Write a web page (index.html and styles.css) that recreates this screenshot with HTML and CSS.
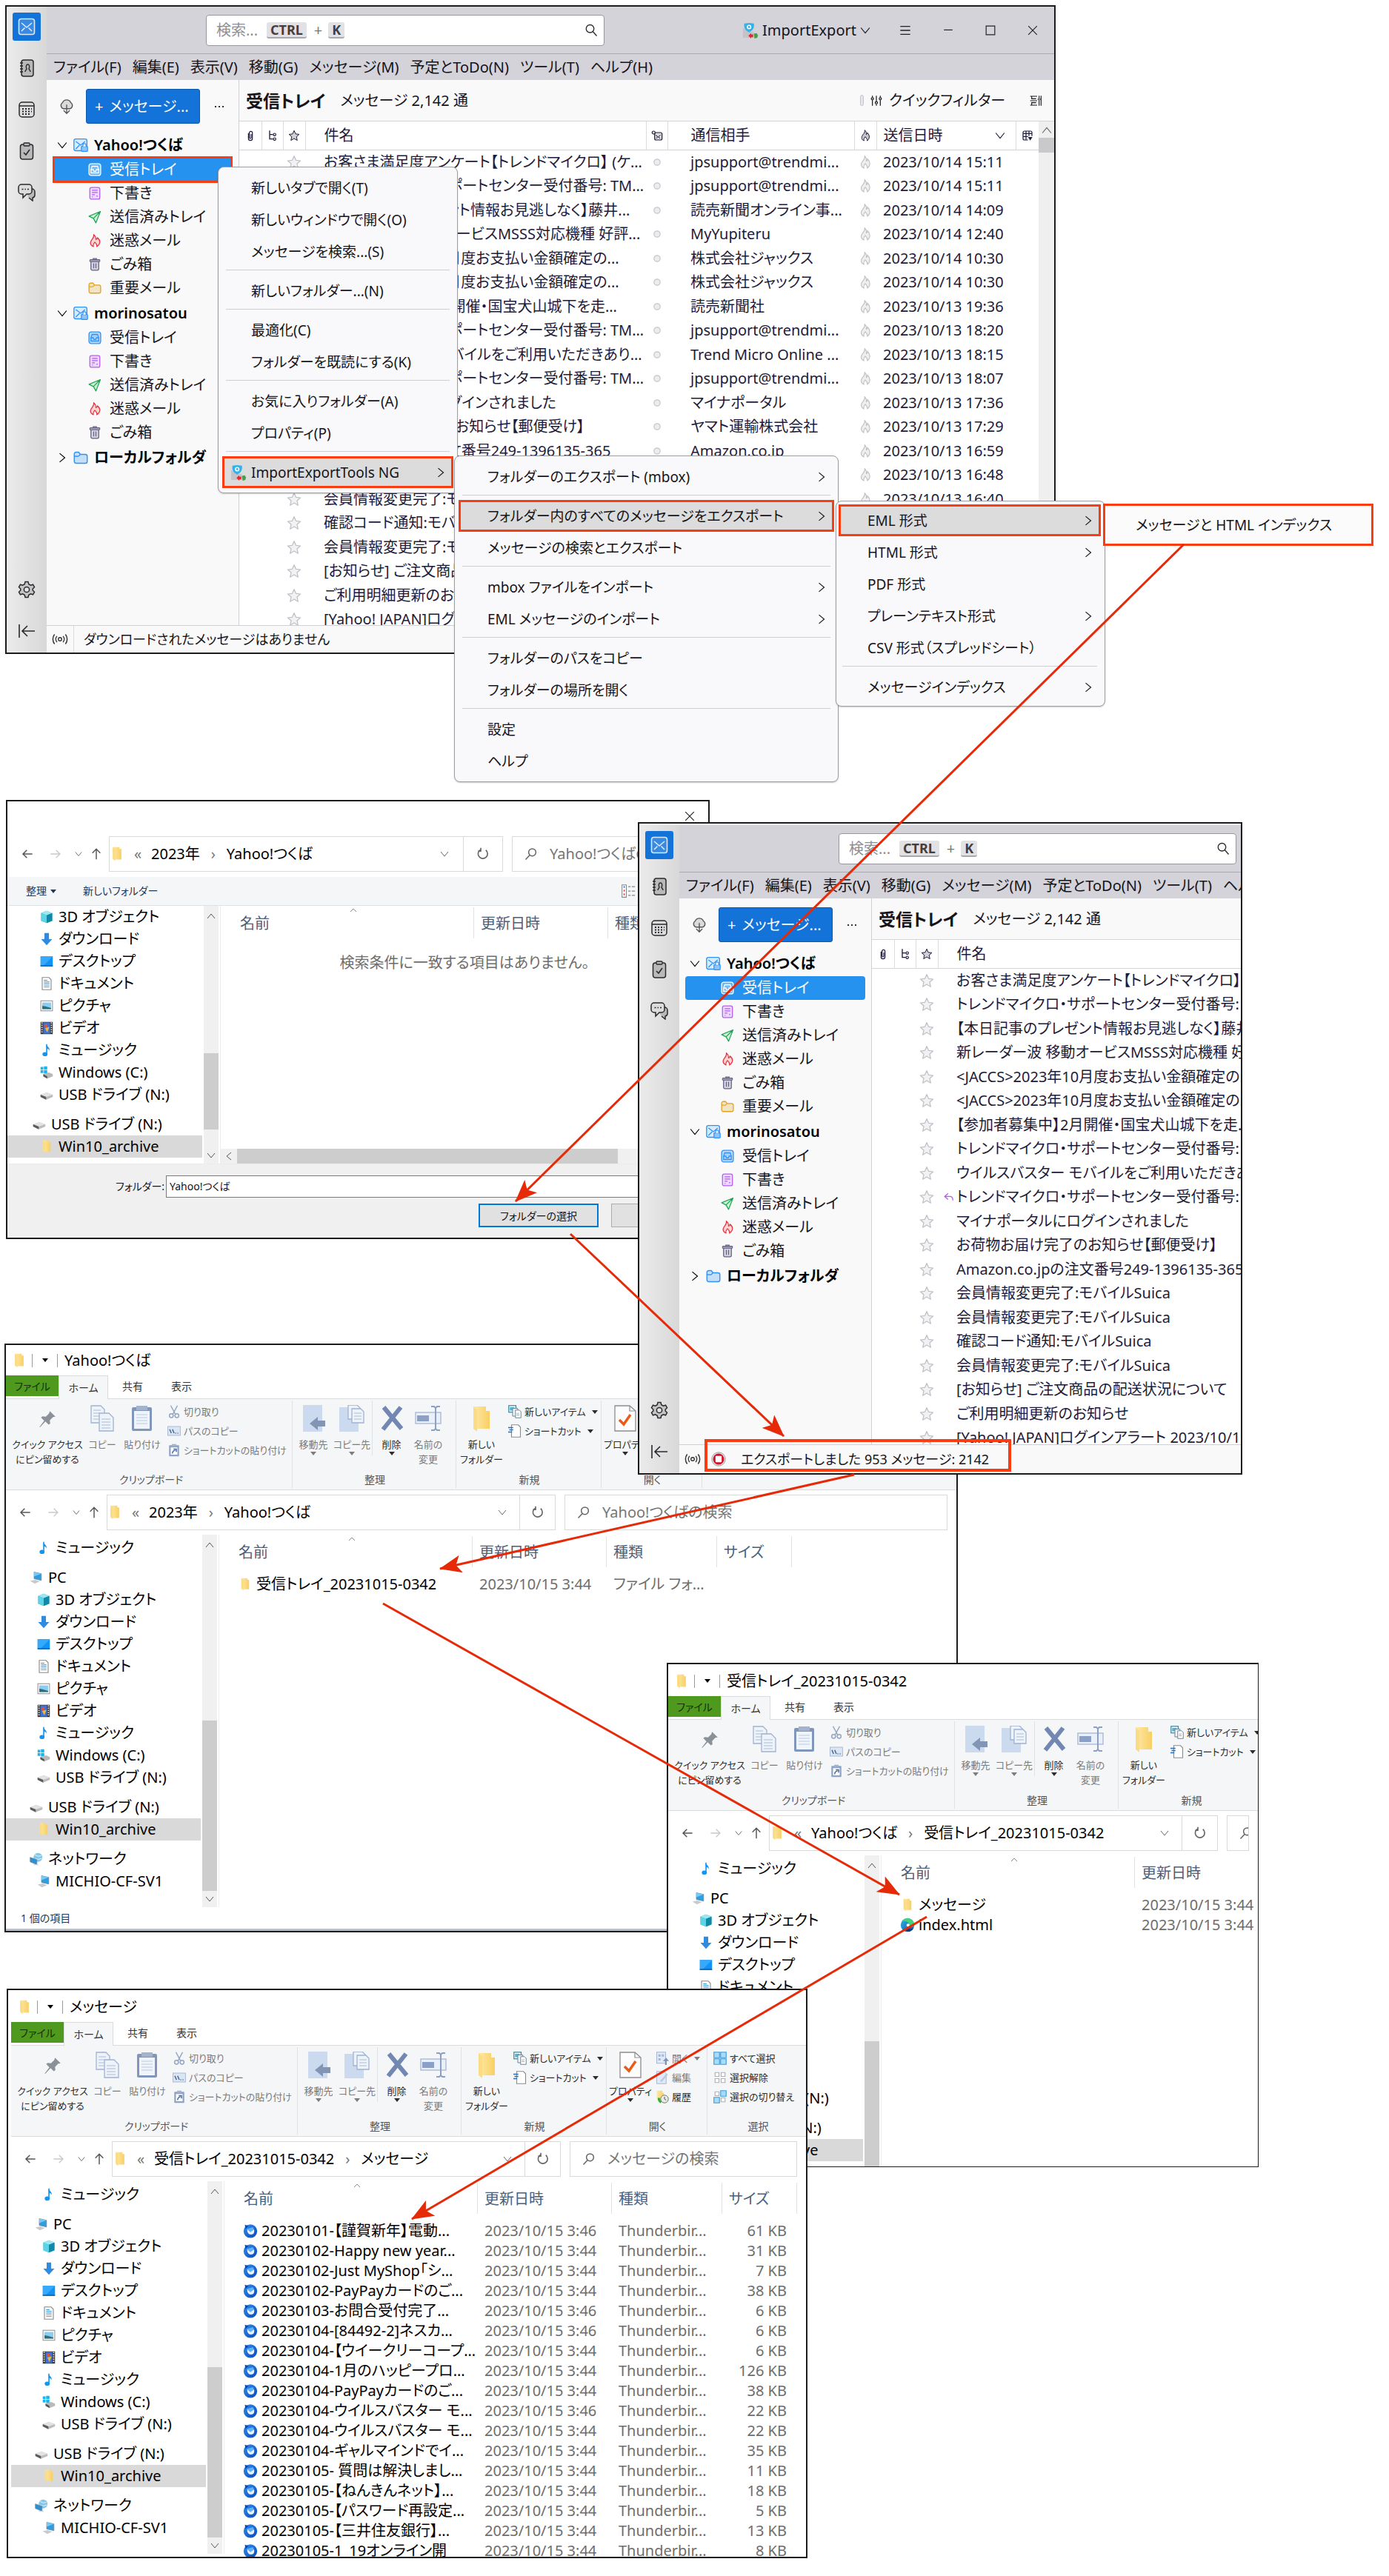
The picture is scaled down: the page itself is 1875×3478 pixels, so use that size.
FILE: index.html
```html
<!DOCTYPE html>
<html lang="ja">
<head>
<meta charset="utf-8">
<meta name="viewport" content="width=device-width, initial-scale=1">
<title>ImportExportTools NG エクスポート手順</title>
<link rel="stylesheet" href="styles.css">
</head>
<body>
<svg class="sprite" aria-hidden="true">
  <defs>
    <linearGradient id="g-folder" x1="0" x2="1"><stop offset="0" stop-color="#ffe9a6"/><stop offset="1" stop-color="#f8cf63"/></linearGradient>
    <linearGradient id="g-edge" x1="0" y1="0" x2="1" y2="1"><stop offset="0" stop-color="#2fb8e6"/><stop offset="1" stop-color="#0c4fa8"/></linearGradient>
    <linearGradient id="g-bird" x1="0" y1="0" x2="1" y2="1"><stop offset="0" stop-color="#2f8df0"/><stop offset="1" stop-color="#0a49b8"/></linearGradient>
  </defs>
  <!-- Mail window -->
  <symbol id="i-mail" viewBox="0 0 24 24"><rect x="1.5" y="1.5" width="21" height="21" rx="3" fill="currentColor" fill-opacity=".2" stroke="currentColor" stroke-width="1.6"/><path d="M5 7l7 6 7-6M5 18l4.500-4.500M19 18l-4.500-4.500" fill="none" stroke="currentColor" stroke-width="1.600"/></symbol>
  <symbol id="i-addr" viewBox="0 0 24 24"><rect x="5" y="1" width="16" height="22" rx="3" fill="#b9b9ba" stroke="#2a2a2e" stroke-width="1.500"/><path d="M3 5h4M3 9h4M3 13h4M3 17h4M10 17c0-2 1.500-2.500 2-4-1.500-3-.5-6 1.500-6s3 3 1.500 6c.5 1.500 2 2 2 4" fill="none" stroke="#2a2a2e" stroke-width="1.400"/></symbol>
  <symbol id="i-cal" viewBox="0 0 24 24"><rect x="2" y="2" width="20" height="20" rx="4" fill="#dcdcdc" stroke="#2a2a2e" stroke-width="1.500"/><path d="M2 7h20" stroke="#2a2a2e" stroke-width="1.500"/><path d="M6 11h2m2 0h2m2 0h2m2 0h1M6 14.500h2m2 0h2m2 0h2m2 0h1M6 18h2m2 0h2m2 0h2" stroke="#2a2a2e" stroke-width="2"/></symbol>
  <symbol id="i-task" viewBox="0 0 24 24"><rect x="3.500" y="3" width="17" height="20" rx="3" fill="#b9b9ba" stroke="#2a2a2e" stroke-width="1.500"/><rect x="8" y="1" width="8" height="4" rx="1" fill="#b9b9ba" stroke="#2a2a2e" stroke-width="1.300"/><path d="M8 14l3 3 5-7" fill="none" stroke="#2a2a2e" stroke-width="1.600"/></symbol>
  <symbol id="i-chat" viewBox="0 0 24 24"><path d="M8 7h11a4 4 0 0 1 4 4v4a4 4 0 0 1-3 4v4l-5-4" fill="#b9b9ba" stroke="#2a2a2e" stroke-width="1.500"/><path d="M5 1h10a4 4 0 0 1 4 4v5a4 4 0 0 1-4 4h-3l-5 5v-5H5a4 4 0 0 1-4-4V5a4 4 0 0 1 4-4z" fill="#dcdcdc" stroke="#2a2a2e" stroke-width="1.500"/><path d="M5.500 7.500h2m2 0h1.500m2 0h2" stroke="#2a2a2e" stroke-width="1.500"/></symbol>
  <symbol id="i-gear" viewBox="0 0 24 24"><path d="M10 1.500h4l.8 3.200 2.600 1.500 3.100-1 2 3.500-2.300 2.300v2l2.300 2.300-2 3.500-3.100-1-2.600 1.500-.8 3.200h-4l-.8-3.200-2.600-1.500-3.100 1-2-3.500L3.800 13v-2L1.500 8.700l2-3.500 3.100 1 2.600-1.500z" fill="#c4c4c5" stroke="#2a2a2e" stroke-width="1.500"/><circle cx="12" cy="12" r="3.600" fill="#e4e4e4" stroke="#2a2a2e" stroke-width="1.500"/></symbol>
  <symbol id="i-collapse" viewBox="0 0 24 24"><path d="M2 3v18M23 12H6M13 5l-7 7 7 7" fill="none" stroke="#2a2a2e" stroke-width="1.600"/></symbol>
  <symbol id="i-cloud" viewBox="0 0 24 24"><path d="M7 15a5 5 0 0 1-1-9 6.500 6.500 0 0 1 12 0 5 5 0 0 1-1 9z" fill="#dadada" stroke="#55555a" stroke-width="1.500"/><path d="M12 9v13M7.500 17.500L12 22l4.500-4.500" fill="none" stroke="#55555a" stroke-width="1.500"/></symbol>
  <symbol id="i-account" viewBox="0 0 24 24"><rect x="1" y="2" width="21" height="19" rx="3" fill="#d7edff" stroke="#2f93f5" stroke-width="1.600"/><path d="M4 6l8 6 7-6M4 18l6-6" fill="none" stroke="#2f93f5" stroke-width="1.600"/><rect x="13" y="14" width="10" height="8" rx="1" fill="#8cc5fb" stroke="#2f93f5" stroke-width="1.500"/><path d="M15.500 14v-2a2.500 2.500 0 0 1 5 0v2" fill="#fff" stroke="#2f93f5" stroke-width="1.500"/></symbol>
  <symbol id="i-inbox" viewBox="0 0 24 24"><rect x="1.500" y="1.500" width="21" height="21" rx="4" fill="currentColor" fill-opacity=".3" stroke="currentColor" stroke-width="1.800"/><path d="M5 12l2-6h10l2 6v6H5zM5 12h4l1.500 3h3L15 12h4" fill="currentColor" fill-opacity=".15" stroke="currentColor" stroke-width="1.700"/></symbol>
  <symbol id="i-draft" viewBox="0 0 24 24"><rect x="3" y="1.500" width="18" height="21" rx="3" fill="#eed8ff" stroke="#b35cf0" stroke-width="1.700"/><path d="M7 6.500h10M7 10.500h10M7 14.500h5M7 18.500h1.500M15 17h2" stroke="#b35cf0" stroke-width="1.700"/></symbol>
  <symbol id="i-sent" viewBox="0 0 24 24"><path d="M22 2L1.500 10.500l8 4L14 22.500zM22 2L9.500 14.500" fill="#c9f2d6" stroke="#23a455" stroke-width="1.700" stroke-linejoin="round"/></symbol>
  <symbol id="i-junk" viewBox="0 0 24 24"><path d="M10 1c5 4 4 7 4 9 2-.5 2.500-2 2.500-3.500C21 10 22 14 20 18c-1 2-2.500 3.500-4.500 4.500 1-3 0-5-3.500-8-2.500 3-4 5-2.500 8C5 21 3 17 5 13c1.500-3.500 6-5.500 5-12z" fill="#ffd4d4" stroke="#e2333e" stroke-width="1.700" stroke-linejoin="round"/></symbol>
  <symbol id="i-trash" viewBox="0 0 24 24"><path d="M5 6h14v14a2.500 2.500 0 0 1-2.500 2.500h-9A2.500 2.500 0 0 1 5 20z" fill="#d5d4e2" stroke="#62607f" stroke-width="1.700"/><rect x="3" y="3.500" width="18" height="3.500" rx="1" fill="#aba9c2" stroke="#62607f" stroke-width="1.400"/><path d="M9 3V1.500h6V3M10 10v9M14 10v9" fill="none" stroke="#62607f" stroke-width="1.600"/></symbol>
  <symbol id="i-folder" viewBox="0 0 24 24"><path d="M1.500 6a3 3 0 0 1 3-3h4l3 3.500h8a3 3 0 0 1 3 3V18a3 3 0 0 1-3 3h-15a3 3 0 0 1-3-3zM1.500 9.500H8l3.500-3" fill="currentColor" fill-opacity=".25" stroke="currentColor" stroke-width="1.700"/></symbol>
  <symbol id="i-clip" viewBox="0 0 24 24"><path d="M8 7v11a4 4 0 0 0 8 0V6.500a3 3 0 0 0-6 0V17a2 2 0 0 0 3.500 0V9" fill="none" stroke="currentColor" stroke-width="1.800"/></symbol>
  <symbol id="i-thread" viewBox="0 0 24 24"><path d="M6 2v17h7M6 10h7" fill="none" stroke="currentColor" stroke-width="2"/><circle cx="16" cy="10" r="2.500" fill="none" stroke="currentColor" stroke-width="1.800"/><circle cx="16" cy="19" r="2.500" fill="none" stroke="currentColor" stroke-width="1.800"/></symbol>
  <symbol id="i-star" viewBox="0 0 24 24"><path d="M12 2l3 6.800 7.300.8-5.500 4.900 1.600 7.300L12 18l-6.400 3.800 1.600-7.300-5.500-4.900L9 8.800z" fill="currentColor" fill-opacity=".2" stroke="currentColor" stroke-width="1.500" stroke-linejoin="round"/></symbol>
  <symbol id="i-flame" viewBox="0 0 24 24"><path d="M11 1c4 4 3 6 3 9 1.500-.5 2-2 2-4 4 4 5 8 3.500 12-.8 2-2 3.500-3.500 4.500 0-3-1-5-4-8-2.500 3-3.500 5-2.500 8C5 21 4 17 5.500 13 7 9.500 12 7 11 1z" fill="currentColor" fill-opacity=".25" stroke="currentColor" stroke-width="1.500"/></symbol>
  <symbol id="i-dot" viewBox="0 0 24 24"><circle cx="12" cy="12" r="5" fill="#ececef" stroke="#c6c6cc" stroke-width="1.500"/></symbol>
  <symbol id="i-readcol" viewBox="0 0 24 24"><rect x="7" y="6" width="15" height="15" rx="3" fill="#d9d9de" stroke="currentColor" stroke-width="1.800"/><path d="M9 11l5 4 5-4M10 18l3-3M18 18l-3-3" fill="none" stroke="currentColor" stroke-width="1.500"/><circle cx="5" cy="6" r="3" fill="#fff" stroke="currentColor" stroke-width="1.800"/></symbol>
  <symbol id="i-picker" viewBox="0 0 24 24"><path d="M13 21H6a3 3 0 0 1-3-3V6a3 3 0 0 1 3-3h12a3 3 0 0 1 3 3v7M3 8h18M3 14h10M9 3v18M15 3v10" fill="none" stroke="currentColor" stroke-width="1.800"/><path d="M13 15h9l-4.500 7z" fill="currentColor"/></symbol>
  <symbol id="i-filter" viewBox="0 0 24 24"><path d="M4 2v3M4 11v11M12 2v11M12 19v3M20 2v3M20 11v11" stroke="currentColor" stroke-width="1.800"/><g fill="none" stroke="currentColor" stroke-width="1.800"><circle cx="4" cy="8" r="2.300"/><circle cx="12" cy="16" r="2.300"/><circle cx="20" cy="8" r="2.300"/></g></symbol>
  <symbol id="i-layout" viewBox="0 0 24 24"><path d="M1 3h14M1 21h14M4 3v5h9M4 21v-5h9M1 12h14M19 2v4M19 12v10M23 2v20" fill="none" stroke="currentColor" stroke-width="1.700"/><circle cx="19" cy="9" r="2" fill="none" stroke="currentColor" stroke-width="1.500"/></symbol>
  <symbol id="i-antenna" viewBox="0 0 24 24"><circle cx="12" cy="12" r="2.500" fill="none" stroke="#333" stroke-width="1.500"/><path d="M7.500 7.500a7 7 0 0 0 0 9M16.500 7.500a7 7 0 0 1 0 9M4 5a11 11 0 0 0 0 14M20 5a11 11 0 0 1 0 14" fill="none" stroke="#333" stroke-width="1.600"/></symbol>
  <symbol id="i-search" viewBox="0 0 24 24"><circle cx="10" cy="9" r="7" fill="none" stroke="#2a2a2e" stroke-width="1.800"/><path d="M15 14l7 8" stroke="#2a2a2e" stroke-width="1.800"/></symbol>
  <symbol id="i-down" viewBox="0 0 24 24"><path d="M2 6l10 12L22 6" fill="none" stroke="currentColor" stroke-width="2"/></symbol>
  <symbol id="i-right" viewBox="0 0 24 24"><path d="M6 2l12 10L6 22" fill="none" stroke="currentColor" stroke-width="2"/></symbol>
  <symbol id="i-more" viewBox="0 0 24 24"><path d="M3 12h3M10.500 12h3M18 12h3" stroke="#333" stroke-width="3"/></symbol>
  <symbol id="i-burger" viewBox="0 0 24 24"><path d="M2 4h20M2 12h20M2 20h20" stroke="#222" stroke-width="2"/></symbol>
  <symbol id="i-min" viewBox="0 0 24 24"><path d="M2 11h20" stroke="#222" stroke-width="2"/></symbol>
  <symbol id="i-max" viewBox="0 0 24 24"><path d="M2 2h20v20H2z" fill="none" stroke="#222" stroke-width="2"/></symbol>
  <symbol id="i-close" viewBox="0 0 24 24"><path d="M2 2l20 20M22 2L2 22" stroke="#222" stroke-width="2"/></symbol>
  <symbol id="i-addon" viewBox="0 0 24 24"><path d="M1 8l8 6h8v9H1z" fill="#c3c3c8"/><path d="M3 2l7-1 7 1c1 6-1 10-7 13C4 12 2 8 3 2z" fill="#35b1ea"/><circle cx="10" cy="7" r="3.300" fill="#fff"/><circle cx="10" cy="7" r="1.600" fill="#35b1ea"/><path d="M9 20l4-4v2h3v4h-3v2z" fill="#e8262b"/><path d="M17 17l4-1 2 3-1 4-4 1z" fill="#43a047"/></symbol>
  <symbol id="i-reply" viewBox="0 0 24 24"><path d="M10 4l-8 7 8 7M2 11h12q7 0 7 9" fill="none" stroke="#b35cf0" stroke-width="2.200"/></symbol>
  <symbol id="i-stop" viewBox="0 0 24 24"><circle cx="12" cy="12" r="11" fill="#e7e7e7" stroke="#8a8a8a" stroke-width="1"/><circle cx="12" cy="12" r="9" fill="#d31428"/><rect x="7" y="7" width="10" height="10" rx="1" fill="#fff"/></symbol>
  <!-- Explorer window -->
  <symbol id="x-folder" viewBox="0 0 24 24"><path d="M5 1h11v3h3v17H9l-4-2z" fill="url(#g-folder)"/><path d="M5 1l4 3v19l-4-3z" fill="#fbdc85"/></symbol>
  <symbol id="x-back" viewBox="0 0 24 24"><path d="M22 12H3M11 4l-8 8 8 8" fill="none" stroke="currentColor" stroke-width="2.200"/></symbol>
  <symbol id="x-fwd" viewBox="0 0 24 24"><path d="M2 12h19M13 4l8 8-8 8" fill="none" stroke="currentColor" stroke-width="2"/></symbol>
  <symbol id="x-up" viewBox="0 0 24 24"><path d="M12 23V2M4 10l8-8 8 8" fill="none" stroke="currentColor" stroke-width="2.200"/></symbol>
  <symbol id="x-refresh" viewBox="0 0 24 24"><path d="M17 5a8.500 8.500 0 1 1-9-1M8 1v6H3" fill="none" stroke="#666" stroke-width="2.200"/></symbol>
  <symbol id="x-search" viewBox="0 0 24 24"><circle cx="14" cy="9" r="6.500" fill="none" stroke="#666" stroke-width="2"/><path d="M9.500 14L2 22" stroke="#666" stroke-width="2"/></symbol>
  <symbol id="x-3d" viewBox="0 0 24 24"><path d="M12 1l10 4v14l-10 4-10-4V5z" fill="#2cb3cf"/><path d="M12 1l10 4-10 4L2 5z" fill="#9be8f3"/><path d="M12 9l10-4v14l-10 4z" fill="#1089a8"/><path d="M2 5l10 4v14L2 19z" fill="#5fd3e6"/></symbol>
  <symbol id="x-download" viewBox="0 0 24 24"><path d="M8 1h8v11h6L12 23 2 12h6z" fill="#2f8be0"/></symbol>
  <symbol id="x-desktop" viewBox="0 0 24 24"><rect x="1" y="3" width="22" height="18" fill="#0f93f5"/><path d="M1 3h22L5 21H1z" fill="#35aafc"/><path d="M1 20h22" stroke="#0a5fae" stroke-width="2"/></symbol>
  <symbol id="x-doc" viewBox="0 0 24 24"><path d="M4 1h12l4 4v18H4z" fill="#fff" stroke="#8b8b8b" stroke-width="1.500"/><path d="M7 6h6M7 9h10M7 12h10" stroke="#2694d8" stroke-width="1.600"/><path d="M7 15h10M7 18h10" stroke="#8a9aa8" stroke-width="1.600"/></symbol>
  <symbol id="x-pic" viewBox="0 0 24 24"><rect x="1.500" y="3" width="21" height="18" fill="#fff" stroke="#9a9a9a" stroke-width="1.500"/><rect x="4" y="6" width="16" height="12" fill="#8ccbf2"/><path d="M4 12l6 1 10 3v2H4z" fill="#2d6f78"/></symbol>
  <symbol id="x-video" viewBox="0 0 24 24"><rect x="1" y="1" width="22" height="22" fill="#3a3a3a"/><rect x="6" y="2" width="12" height="20" fill="#3f72d8"/><circle cx="11" cy="8" r="3" fill="#e2543a"/><path d="M9 12l8-2-4 10z" fill="#e7bc32"/><path d="M3.500 2v20M20.500 2v20" stroke="#fff" stroke-width="2" stroke-dasharray="2 2"/></symbol>
  <symbol id="x-music" viewBox="0 0 24 24"><path d="M11 1c1 4 7 5 6 12-1-3-3-4-4-4v9" fill="#1296f0"/><path d="M11 1h2v18h-2z" fill="#1296f0"/><ellipse cx="9" cy="19" rx="4.500" ry="3.800" fill="#1296f0"/></symbol>
  <symbol id="x-win" viewBox="0 0 24 24"><path d="M1 2h5v5H1zM7 1h6v6H7zM1 8h5v5H1zM7 8h6v6H7z" fill="#19b5ee"/><path d="M6 15l10-3 7 3v4l-10 4-7-4z" fill="#b9b9b9"/><path d="M6 15l7 4v4l-7-4z" fill="#555"/></symbol>
  <symbol id="x-drive" viewBox="0 0 24 24"><path d="M1 12l11-4 11 4v4l-12 5-10-5z" fill="#bcbcbc"/><path d="M1 12l11-4 11 4-12 4z" fill="#e3e3e3"/><path d="M1 12l10 4v5L1 16z" fill="#5c5c5c"/></symbol>
  <symbol id="x-pc" viewBox="0 0 24 24"><path d="M8 2l13 3v12L8 14z" fill="#2f9ddf" stroke="#6b8296" stroke-width="1"/><path d="M8 2l13 3L8 10z" fill="#77c9f5"/><path d="M1 18l9-2 8 3-9 4z" fill="#c6cbd0"/></symbol>
  <symbol id="x-net" viewBox="0 0 24 24"><circle cx="15" cy="9" r="8" fill="#86c6e8"/><path d="M9 4q6 5 12 2M8 11q7 3 14 0" fill="none" stroke="#fff" stroke-width="1"/><path d="M1 9l12 4v9L1 17z" fill="#2a92d4" stroke="#6b8296" stroke-width="1"/><path d="M6 22l8-1 3 2H8z" fill="#ccd0d4"/></symbol>
  <symbol id="x-pin" viewBox="0 0 24 24"><path d="M15 2l7 7-3 .5-4 4 .5 4-2 1.500-4-4L3 22l-1 0 6-8-4-4 2-1.500 4 .5 4-4z" fill="#8b9199"/></symbol>
  <symbol id="x-copy" viewBox="0 0 32 36"><g fill="#eef3fa" stroke="#9fb3d1" stroke-width="1.300"><path d="M1 1h13l5 5v18H1z"/><path d="M12 11h13l6 6v18H12z"/></g><path d="M4 7h10M4 11h8M4 15h8M4 19h8M15 19h12M15 23h12M15 27h12M15 31h12" stroke="#aabbd6" stroke-width="1.200"/></symbol>
  <symbol id="x-paste" viewBox="0 0 32 36"><rect x="2" y="3" width="27" height="32" rx="2" fill="#8295bb"/><rect x="5" y="8" width="21" height="24" fill="#f0f4fb"/><path d="M8 1h15v6H8z" fill="#a3b2cd"/><path d="M8 13h15M8 17h15M8 21h15M8 25h15" stroke="#bccae0" stroke-width="1.200"/></symbol>
  <symbol id="x-cut" viewBox="0 0 24 24"><path d="M6 1l8 15M18 1l-8 15" stroke="#93a4c0" stroke-width="2"/><circle cx="7" cy="19" r="3.500" fill="none" stroke="#93a4c0" stroke-width="2"/><circle cx="17" cy="19" r="3.500" fill="none" stroke="#93a4c0" stroke-width="2"/></symbol>
  <symbol id="x-path" viewBox="0 0 24 24"><rect x="0.700" y="4" width="22.500" height="16" fill="#dbe6f5" stroke="#a7b9d6" stroke-width="1.300"/><path d="M4 9l3 7M9 9l3 7M14 16h1.500M18 16h1.500" stroke="#4e658c" stroke-width="2"/></symbol>
  <symbol id="x-spaste" viewBox="0 0 24 24"><rect x="3" y="3" width="18" height="20" rx="1" fill="#8fa3c6"/><rect x="6" y="7" width="12" height="13" fill="#fff"/><path d="M8 1h8v4H8z" fill="#a3b2cd"/><path d="M9 18q0-5 5-6M11 10h5v5" fill="none" stroke="#4b6ba5" stroke-width="2"/></symbol>
  <symbol id="x-move" viewBox="0 0 32 36"><path d="M2 0h26v36H2z" fill="#ccdaef"/><path d="M11 25l11-9v5h10v8H22v5z" fill="#8295b5"/></symbol>
  <symbol id="x-copyto" viewBox="0 0 36 36"><path d="M1 3h26v33H1z" fill="#ccdaef"/><g fill="#eef3fa" stroke="#9fb3d1" stroke-width="1.300"><path d="M13 0h12l4 4v15H13z"/><path d="M18 5h12l4 4v15H18z"/></g><path d="M21 11h10M21 15h10M21 19h10" stroke="#aabbd6" stroke-width="1.200"/></symbol>
  <symbol id="x-del" viewBox="0 0 32 36"><path d="M5 3l24 29M28 3L4 33" stroke="#7287b2" stroke-width="6"/></symbol>
  <symbol id="x-rename" viewBox="0 0 36 36"><rect x="1" y="10" width="34" height="15" fill="#eaf0f9" stroke="#a5b6d2" stroke-width="1.300"/><rect x="3" y="14" width="16" height="8" fill="#8ba0c6"/><path d="M28 3v30M22 2h4l2 2 2-2h4M22 34h4l2-2 2 2h4" fill="none" stroke="#8ba0c6" stroke-width="2"/></symbol>
  <symbol id="x-bigfolder" viewBox="0 0 32 36"><path d="M5 2h17v6h5v24H10z" fill="url(#g-folder)"/><path d="M5 2l5 5v29l-5-4z" fill="#fbdc85"/></symbol>
  <symbol id="x-newitem" viewBox="0 0 24 24"><rect x="1" y="1" width="13" height="12" fill="#e5f6fb" stroke="#3c7e96" stroke-width="1.500"/><rect x="3" y="4" width="8" height="6" fill="#4fb7d3"/><path d="M8 6h9v14H8z" fill="#f4f8fa" stroke="#6b7f90" stroke-width="1.300"/><path d="M13 9h7l3 3v11H13z" fill="#fff" stroke="#6b7f90" stroke-width="1.300"/><path d="M15 15h5M15 18h5" stroke="#8aa" stroke-width="1.200"/></symbol>
  <symbol id="x-shortcut" viewBox="0 0 24 24"><path d="M6 1h12l4 4v18H6z" fill="#fff" stroke="#8b8b8b" stroke-width="1.500"/><path d="M0 6h9M2 10h7M0 14h7" stroke="#2d6fb5" stroke-width="2"/></symbol>
  <symbol id="x-props" viewBox="0 0 32 36"><path d="M2 1h20l8 7v27H2z" fill="#fdfdfd" stroke="#8d8d8d" stroke-width="1.300"/><path d="M22 1v7h8" fill="none" stroke="#8d8d8d" stroke-width="1.200"/><path d="M8 20l6 6 9-13" fill="none" stroke="#ec5b13" stroke-width="3.500"/></symbol>
  <symbol id="x-open" viewBox="0 0 24 24"><rect x="2" y="1" width="16" height="20" fill="#dfe9f7" stroke="#a5b6d2" stroke-width="1.300"/><path d="M5 5h4v4H5zM11 5h4v4h-4zM5 12h4v4H5z" fill="#a5b6d2"/><path d="M17 24v-7h-4l6-6 5 6h-4v7z" fill="#7d92b5"/></symbol>
  <symbol id="x-edit" viewBox="0 0 24 24"><path d="M2 1h13l4 4v18H2z" fill="#dfe9f7" stroke="#a5b6d2" stroke-width="1.300"/><path d="M8 18L20 5l2 2-11 13z" fill="#b8c8e0"/></symbol>
  <symbol id="x-history" viewBox="0 0 24 24"><path d="M2 1h10v4h3v14H6l-4-2z" fill="url(#g-folder)"/><circle cx="16" cy="16" r="7" fill="#e6ebe6" stroke="#777" stroke-width="1.300"/><path d="M16 12v4l3 2" fill="none" stroke="#555" stroke-width="1.300"/><path d="M6 14a8 8 0 0 0 4 8" fill="none" stroke="#2fb12f" stroke-width="4"/></symbol>
  <symbol id="x-selall" viewBox="0 0 24 24"><g fill="#a9dcf9" stroke="#3b9bdc" stroke-width="1.500"><path d="M1 1h10v10H1zM13 1h10v10H13zM1 13h10v10H1zM13 13h10v10H13z"/></g></symbol>
  <symbol id="x-selnone" viewBox="0 0 24 24"><g fill="#fff" stroke="#b0b0b0" stroke-width="1.500"><path d="M3 3h7v7H3zM14 3h7v7h-7zM3 14h7v7H3zM14 14h7v7h-7z"/></g></symbol>
  <symbol id="x-selinv" viewBox="0 0 24 24"><path d="M3 3h7v7H3zM14 14h7v7h-7z" fill="#fff" stroke="#b0b0b0" stroke-width="1.500"/><path d="M13 1h10v10H13zM1 13h10v10H1z" fill="#a9dcf9" stroke="#3b9bdc" stroke-width="1.500"/></symbol>
  <symbol id="x-edge" viewBox="0 0 24 24"><circle cx="12" cy="12" r="11" fill="url(#g-edge)"/><path d="M3 6C8-2 22 0 23 11c0 4-4 5-8 4 2-6-5-11-12-9z" fill="#48cf7b"/><path d="M15 14c-2 1-1 3 1 4 3 1 5 0 6-1-2 5-8 7-12 5 0-4 1-7 5-8z" fill="#0b3d86"/><circle cx="13" cy="12.500" r="2.500" fill="#fff"/></symbol>
  <symbol id="x-bird" viewBox="0 0 24 24"><circle cx="12" cy="12.500" r="11" fill="url(#g-bird)"/><path d="M7 9l5-1 6 2c1 5-1 8-5 8s-7-4-6-9z" fill="#eaf3ff"/><path d="M6 9l6 5 6-4-2-4z" fill="#5fb1f7"/><path d="M3 2l6 2-5 5z" fill="#0a49b8"/></symbol>
  <symbol id="x-list" viewBox="0 0 24 24"><path d="M2 2h7v20H2z" fill="#fff" stroke="#888" stroke-width="1.300"/><path d="M5.500 4v3" stroke="#3a7ec4" stroke-width="2"/><path d="M5.500 10v3M5.500 16v3" stroke="#c44" stroke-width="2"/><path d="M12 5h4M18 5h5M12 12h4M18 12h5M12 19h4M18 19h5" stroke="#888" stroke-width="1.500"/></symbol>
</svg>

<main class="canvas">

  <!-- Mail window with the export menu open -->
  <section class="win tb tb-first" aria-label="Thunderbird">
    <nav class="spaces" aria-label="スペース">
      <button class="space on" aria-label="メール"><svg><use href="#i-mail"/></svg></button>
      <button class="space" aria-label="アドレス帳"><svg><use href="#i-addr"/></svg></button>
      <button class="space" aria-label="カレンダー"><svg><use href="#i-cal"/></svg></button>
      <button class="space" aria-label="ToDo"><svg><use href="#i-task"/></svg></button>
      <button class="space" aria-label="チャット"><svg><use href="#i-chat"/></svg></button>
      <button class="space low" aria-label="設定"><svg><use href="#i-gear"/></svg></button>
      <button class="space" aria-label="折りたたむ"><svg><use href="#i-collapse"/></svg></button>
    </nav>
    <div class="tb-main">
      <header class="topbar">
        <label class="search"><input type="search" placeholder="検索..." aria-label="検索"><kbd>CTRL</kbd><span>+</span><kbd>K</kbd><svg class="s18"><use href="#i-search"/></svg></label>
        <div class="wincontrols">
          <button class="addon"><svg class="s22"><use href="#i-addon"/></svg>ImportExport<svg class="s14"><use href="#i-down"/></svg></button>
          <button aria-label="メニュー"><svg class="s16"><use href="#i-burger"/></svg></button>
          <button aria-label="最小化"><svg class="s14"><use href="#i-min"/></svg></button>
          <button aria-label="最大化"><svg class="s14"><use href="#i-max"/></svg></button>
          <button aria-label="閉じる"><svg class="s14"><use href="#i-close"/></svg></button>
        </div>
      </header>
      <nav class="menubar"><button>ファイル(F)</button><button>編集(E)</button><button>表示(V)</button><button>移動(G)</button><button>メッセージ(M)</button><button>予定とToDo(N)</button><button>ツール(T)</button><button>ヘルプ(H)</button></nav>
      <div class="tb-body">
        <aside class="folders">
          <div class="compose"><svg class="s22"><use href="#i-cloud"/></svg><button class="new"><span>+</span>メッセージ...</button><button class="more" aria-label="その他"><svg class="s16"><use href="#i-more"/></svg></button></div>
          <ul class="tree">
            <li class="acct"><svg class="s14"><use href="#i-down"/></svg><svg class="s20"><use href="#i-account"/></svg><a href="#">Yahoo!つくば</a></li>
            <li class="sel marked"><svg class="s18"><use href="#i-inbox"/></svg><a href="#">受信トレイ</a></li>
            <li><svg class="s18"><use href="#i-draft"/></svg><a href="#">下書き</a></li>
            <li><svg class="s18"><use href="#i-sent"/></svg><a href="#">送信済みトレイ</a></li>
            <li><svg class="s18"><use href="#i-junk"/></svg><a href="#">迷惑メール</a></li>
            <li><svg class="s18"><use href="#i-trash"/></svg><a href="#">ごみ箱</a></li>
            <li><svg class="s18 gold"><use href="#i-folder"/></svg><a href="#">重要メール</a></li>
            <li class="acct"><svg class="s14"><use href="#i-down"/></svg><svg class="s20"><use href="#i-account"/></svg><a href="#">morinosatou</a></li>
            <li><svg class="s18 blue"><use href="#i-inbox"/></svg><a href="#">受信トレイ</a></li>
            <li><svg class="s18"><use href="#i-draft"/></svg><a href="#">下書き</a></li>
            <li><svg class="s18"><use href="#i-sent"/></svg><a href="#">送信済みトレイ</a></li>
            <li><svg class="s18"><use href="#i-junk"/></svg><a href="#">迷惑メール</a></li>
            <li><svg class="s18"><use href="#i-trash"/></svg><a href="#">ごみ箱</a></li>
            <li class="acct"><svg class="s14"><use href="#i-right"/></svg><svg class="s20 blue"><use href="#i-folder"/></svg><a href="#">ローカルフォルダ</a></li>
          </ul>
        </aside>
        <div class="messages">
          <div class="msg-head"><h2>受信トレイ</h2><span>メッセージ 2,142 通</span><button class="quick"><i></i><svg class="s16"><use href="#i-filter"/></svg>クイックフィルター</button><button aria-label="表示オプション"><svg class="s16"><use href="#i-layout"/></svg></button></div>
          <div class="msg-list">
            <table>
              <colgroup><col class="c30"><col class="c29"><col class="c30"><col><col class="c29"><col class="c252"><col class="c30"><col class="c188"><col class="c31"></colgroup>
              <thead><tr><th><svg class="s16"><use href="#i-clip"/></svg></th><th><svg class="s16"><use href="#i-thread"/></svg></th><th><svg class="s16"><use href="#i-star"/></svg></th><th class="subj">件名</th><th><svg class="s16"><use href="#i-readcol"/></svg></th><th class="who">通信相手</th><th><svg class="s16"><use href="#i-flame"/></svg></th><th class="date">送信日時<svg class="s14"><use href="#i-down"/></svg></th><th><svg class="s16"><use href="#i-picker"/></svg></th></tr></thead>
              <tbody>
              <tr><td></td><td></td><td><svg class="s20 faint"><use href="#i-star"/></svg></td><td class="subj">お客さま満足度アンケート【トレンドマイクロ】 (ケー...</td><td><svg class="s20"><use href="#i-dot"/></svg></td><td class="who">jpsupport@trendmi...</td><td><svg class="s18 faint"><use href="#i-flame"/></svg></td><td class="date">2023/10/14 15:11</td><td></td></tr>
              <tr><td></td><td></td><td><svg class="s20 faint"><use href="#i-star"/></svg></td><td class="subj">トレンドマイクロ・サポートセンター受付番号: TM-...</td><td><svg class="s20"><use href="#i-dot"/></svg></td><td class="who">jpsupport@trendmi...</td><td><svg class="s18 faint"><use href="#i-flame"/></svg></td><td class="date">2023/10/14 15:11</td><td></td></tr>
              <tr><td></td><td></td><td><svg class="s20 faint"><use href="#i-star"/></svg></td><td class="subj">【本日記事のプレゼント情報お見逃しなく】藤井...</td><td><svg class="s20"><use href="#i-dot"/></svg></td><td class="who">読売新聞オンライン事...</td><td><svg class="s18 faint"><use href="#i-flame"/></svg></td><td class="date">2023/10/14 14:09</td><td></td></tr>
              <tr><td></td><td></td><td><svg class="s20 faint"><use href="#i-star"/></svg></td><td class="subj">新レーダー波 移動オービスMSSS対応機種 好評...</td><td><svg class="s20"><use href="#i-dot"/></svg></td><td class="who">MyYupiteru</td><td><svg class="s18 faint"><use href="#i-flame"/></svg></td><td class="date">2023/10/14 12:40</td><td></td></tr>
              <tr><td></td><td></td><td><svg class="s20 faint"><use href="#i-star"/></svg></td><td class="subj">&lt;JACCS&gt;2023年10月度お支払い金額確定の...</td><td><svg class="s20"><use href="#i-dot"/></svg></td><td class="who">株式会社ジャックス</td><td><svg class="s18 faint"><use href="#i-flame"/></svg></td><td class="date">2023/10/14 10:30</td><td></td></tr>
              <tr><td></td><td></td><td><svg class="s20 faint"><use href="#i-star"/></svg></td><td class="subj">&lt;JACCS&gt;2023年10月度お支払い金額確定の...</td><td><svg class="s20"><use href="#i-dot"/></svg></td><td class="who">株式会社ジャックス</td><td><svg class="s18 faint"><use href="#i-flame"/></svg></td><td class="date">2023/10/14 10:30</td><td></td></tr>
              <tr><td></td><td></td><td><svg class="s20 faint"><use href="#i-star"/></svg></td><td class="subj">【参加者募集中】2月開催・国宝犬山城下を走...</td><td><svg class="s20"><use href="#i-dot"/></svg></td><td class="who">読売新聞社</td><td><svg class="s18 faint"><use href="#i-flame"/></svg></td><td class="date">2023/10/13 19:36</td><td></td></tr>
              <tr><td></td><td></td><td><svg class="s20 faint"><use href="#i-star"/></svg></td><td class="subj">トレンドマイクロ・サポートセンター受付番号: TM-...</td><td><svg class="s20"><use href="#i-dot"/></svg></td><td class="who">jpsupport@trendmi...</td><td><svg class="s18 faint"><use href="#i-flame"/></svg></td><td class="date">2023/10/13 18:20</td><td></td></tr>
              <tr><td></td><td></td><td><svg class="s20 faint"><use href="#i-star"/></svg></td><td class="subj">ウイルスバスター モバイルをご利用いただきありがと...</td><td><svg class="s20"><use href="#i-dot"/></svg></td><td class="who">Trend Micro Online ...</td><td><svg class="s18 faint"><use href="#i-flame"/></svg></td><td class="date">2023/10/13 18:15</td><td></td></tr>
              <tr><td></td><td></td><td><svg class="s20 faint"><use href="#i-star"/></svg></td><td class="subj">トレンドマイクロ・サポートセンター受付番号: TM-...</td><td><svg class="s20"><use href="#i-dot"/></svg></td><td class="who">jpsupport@trendmi...</td><td><svg class="s18 faint"><use href="#i-flame"/></svg></td><td class="date">2023/10/13 18:07</td><td></td></tr>
              <tr><td></td><td></td><td><svg class="s20 faint"><use href="#i-star"/></svg></td><td class="subj">マイナポータルにログインされました</td><td><svg class="s20"><use href="#i-dot"/></svg></td><td class="who">マイナポータル</td><td><svg class="s18 faint"><use href="#i-flame"/></svg></td><td class="date">2023/10/13 17:36</td><td></td></tr>
              <tr><td></td><td></td><td><svg class="s20 faint"><use href="#i-star"/></svg></td><td class="subj">お荷物お届け完了のお知らせ【郵便受け】</td><td><svg class="s20"><use href="#i-dot"/></svg></td><td class="who">ヤマト運輸株式会社</td><td><svg class="s18 faint"><use href="#i-flame"/></svg></td><td class="date">2023/10/13 17:29</td><td></td></tr>
              <tr><td></td><td></td><td><svg class="s20 faint"><use href="#i-star"/></svg></td><td class="subj">Amazon.co.jpの注文番号249-1396135-365</td><td><svg class="s20"><use href="#i-dot"/></svg></td><td class="who">Amazon.co.jp</td><td><svg class="s18 faint"><use href="#i-flame"/></svg></td><td class="date">2023/10/13 16:59</td><td></td></tr>
              <tr><td></td><td></td><td><svg class="s20 faint"><use href="#i-star"/></svg></td><td class="subj">会員情報変更完了:モバイルSuica</td><td></td><td class="who"></td><td><svg class="s18 faint"><use href="#i-flame"/></svg></td><td class="date">2023/10/13 16:48</td><td></td></tr>
              <tr><td></td><td></td><td><svg class="s20 faint"><use href="#i-star"/></svg></td><td class="subj">会員情報変更完了:モバイルSuica</td><td></td><td class="who"></td><td><svg class="s18 faint"><use href="#i-flame"/></svg></td><td class="date">2023/10/13 16:40</td><td></td></tr>
              <tr><td></td><td></td><td><svg class="s20 faint"><use href="#i-star"/></svg></td><td class="subj">確認コード通知:モバイルSuica</td><td colspan="5"></td></tr>
              <tr><td></td><td></td><td><svg class="s20 faint"><use href="#i-star"/></svg></td><td class="subj">会員情報変更完了:モバイルSuica</td><td colspan="5"></td></tr>
              <tr><td></td><td></td><td><svg class="s20 faint"><use href="#i-star"/></svg></td><td class="subj">[お知らせ] ご注文商品の配送状況について</td><td colspan="5"></td></tr>
              <tr><td></td><td></td><td><svg class="s20 faint"><use href="#i-star"/></svg></td><td class="subj">ご利用明細更新のお知らせ</td><td colspan="5"></td></tr>
              <tr><td></td><td></td><td><svg class="s20 faint"><use href="#i-star"/></svg></td><td class="subj">[Yahoo! JAPAN]ログインアラート</td><td colspan="5"></td></tr>
              </tbody>
            </table>
            <div class="tb-scroll"><svg class="s14"><use href="#i-down"/></svg><i></i></div>
          </div>
        </div>
      </div>
      <footer class="tb-status"><svg class="s22"><use href="#i-antenna"/></svg><span class="rule"></span><output>ダウンロードされたメッセージはありません</output></footer>
    </div>
  </section>

  <ul class="menu menu-folder">
    <li><button>新しいタブで開く(T)</button></li>
    <li><button>新しいウィンドウで開く(O)</button></li>
    <li><button>メッセージを検索...(S)</button></li>
    <li class="sep"></li>
    <li><button>新しいフォルダー...(N)</button></li>
    <li class="sep"></li>
    <li><button>最適化(C)</button></li>
    <li><button>フォルダーを既読にする(K)</button></li>
    <li class="sep"></li>
    <li><button>お気に入りフォルダー(A)</button></li>
    <li><button>プロパティ(P)</button></li>
    <li class="sep"></li>
    <li><button class="hot iconed"><svg class="s22"><use href="#i-addon"/></svg>ImportExportTools NG<svg class="s14 go"><use href="#i-right"/></svg></button></li>
  </ul>
  <ul class="menu menu-tools">
    <li><button>フォルダーのエクスポート (mbox)<svg class="s14 go"><use href="#i-right"/></svg></button></li>
    <li class="sep"></li>
    <li><button class="hot">フォルダー内のすべてのメッセージをエクスポート<svg class="s14 go"><use href="#i-right"/></svg></button></li>
    <li><button>メッセージの検索とエクスポート</button></li>
    <li class="sep"></li>
    <li><button>mbox ファイルをインポート<svg class="s14 go"><use href="#i-right"/></svg></button></li>
    <li><button>EML メッセージのインポート<svg class="s14 go"><use href="#i-right"/></svg></button></li>
    <li class="sep"></li>
    <li><button>フォルダーのパスをコピー</button></li>
    <li><button>フォルダーの場所を開く</button></li>
    <li class="sep"></li>
    <li><button>設定</button></li>
    <li><button>ヘルプ</button></li>
  </ul>
  <ul class="menu menu-format">
    <li><button class="hot">EML 形式<svg class="s14 go"><use href="#i-right"/></svg></button></li>
    <li><button>HTML 形式<svg class="s14 go"><use href="#i-right"/></svg></button></li>
    <li><button>PDF 形式</button></li>
    <li><button>プレーンテキスト形式<svg class="s14 go"><use href="#i-right"/></svg></button></li>
    <li><button>CSV 形式（スプレッドシート）</button></li>
    <li class="sep"></li>
    <li><button>メッセージインデックス<svg class="s14 go"><use href="#i-right"/></svg></button></li>
  </ul>
  <button class="menu-index">メッセージと HTML インデックス</button>

  <!-- Folder picker -->
  <section class="win dialog" aria-label="フォルダーの選択">
    <div class="dlg-title"><button aria-label="閉じる"><svg class="s14"><use href="#i-close"/></svg></button></div>
    <div class="addr">
      <button class="nav" aria-label="戻る"><svg class="s16"><use href="#x-back"/></svg></button><button class="nav dim" aria-label="進む"><svg class="s16"><use href="#x-fwd"/></svg></button><button class="nav recent" aria-label="履歴"><svg class="s10"><use href="#i-down"/></svg></button><button class="nav parent" aria-label="上へ"><svg class="s16"><use href="#x-up"/></svg></button>
      <div class="crumbs"><svg class="s20"><use href="#x-folder"/></svg><i>«</i><a href="#">2023年</a><i>›</i><a href="#">Yahoo!つくば</a><svg class="s12 drop"><use href="#i-down"/></svg><button aria-label="更新"><svg class="s18"><use href="#x-refresh"/></svg></button></div>
      <label class="find"><svg class="s18"><use href="#x-search"/></svg><input type="search" placeholder="Yahoo!つくばの検索" aria-label="検索"></label>
    </div>
    <div class="dlg-tools"><button>整理<i class="caret"></i></button><button>新しいフォルダー</button><svg class="s20"><use href="#x-list"/></svg></div>
    <div class="ex-body">
      <ul class="places">
        <li><svg class="s18"><use href="#x-3d"/></svg><a href="#">3D オブジェクト</a></li>
        <li><svg class="s18"><use href="#x-download"/></svg><a href="#">ダウンロード</a></li>
        <li><svg class="s18"><use href="#x-desktop"/></svg><a href="#">デスクトップ</a></li>
        <li><svg class="s18"><use href="#x-doc"/></svg><a href="#">ドキュメント</a></li>
        <li><svg class="s18"><use href="#x-pic"/></svg><a href="#">ピクチャ</a></li>
        <li><svg class="s18"><use href="#x-video"/></svg><a href="#">ビデオ</a></li>
        <li><svg class="s18"><use href="#x-music"/></svg><a href="#">ミュージック</a></li>
        <li><svg class="s18"><use href="#x-win"/></svg><a href="#">Windows (C:)</a></li>
        <li><svg class="s18"><use href="#x-drive"/></svg><a href="#">USB ドライブ (N:)</a></li>
        <li class="root"><svg class="s18"><use href="#x-drive"/></svg><a href="#">USB ドライブ (N:)</a></li>
        <li class="sel"><svg class="s18"><use href="#x-folder"/></svg><a href="#">Win10_archive</a></li>
      </ul>
      <div class="ex-scroll"><svg class="s12 flip"><use href="#i-down"/></svg><i></i><svg class="s12"><use href="#i-down"/></svg></div>
      <div class="files">
        <table><colgroup><col class="n"><col class="d"><col class="t"></colgroup>
          <thead><tr><th class="sorted">名前</th><th>更新日時</th><th>種類</th></tr></thead></table>
        <p class="empty">検索条件に一致する項目はありません。</p>
        <div class="hscroll"><svg class="s12 left"><use href="#i-down"/></svg><i></i></div>
      </div>
    </div>
    <form class="dlg-foot">
      <div class="field"><label for="folder">フォルダー:</label><input id="folder" type="text" value="Yahoo!つくば"></div>
      <div class="acts"><button type="button" class="primary">フォルダーの選択</button><button type="button">キャンセル</button></div>
    </form>
  </section>

  <!-- Exported folder -->
  <section class="win ex ex-one" aria-label="Yahoo!つくば">
    <header class="ex-title"><svg class="s20"><use href="#x-folder"/></svg><span class="qat"><i class="caret"></i></span><h2>Yahoo!つくば</h2></header>
    <nav class="tabs"><button class="file">ファイル</button><button class="on">ホーム</button><button>共有</button><button>表示</button></nav>
    <div class="ribbon">
      <div class="grp g1"><div class="tools"><button class="big dark w100"><svg class="pin"><use href="#x-pin"/></svg>クイック アクセス<br>にピン留めする</button><button class="big w48"><svg><use href="#x-copy"/></svg>コピー</button><button class="big w60"><svg><use href="#x-paste"/></svg>貼り付け</button><div class="small"><button><svg><use href="#x-cut"/></svg>切り取り</button><button><svg><use href="#x-path"/></svg>パスのコピー</button><button><svg><use href="#x-spaste"/></svg>ショートカットの貼り付け</button></div></div><span>クリップボード</span></div>
      <div class="grp g2"><div class="tools"><button class="big w52"><svg><use href="#x-move"/></svg>移動先<i class="caret"></i></button><button class="big w52"><svg><use href="#x-copyto"/></svg>コピー先<i class="caret"></i></button><button class="big dark w52 split"><svg><use href="#x-del"/></svg>削除<i class="caret"></i></button><button class="big w48"><svg><use href="#x-rename"/></svg>名前の<br>変更</button></div><span>整理</span></div>
      <div class="grp g3"><div class="tools"><button class="big dark w64"><svg><use href="#x-bigfolder"/></svg>新しい<br>フォルダー</button><div class="small dark"><button><svg><use href="#x-newitem"/></svg>新しいアイテム<i class="caret"></i></button><button><svg><use href="#x-shortcut"/></svg>ショートカット<i class="caret"></i></button></div></div><span>新規</span></div>
      <div class="grp g4"><div class="tools"><button class="big dark w60"><svg><use href="#x-props"/></svg>プロパティ<i class="caret"></i></button></div><span>開く</span></div>
    </div>
    <div class="addr">
      <button class="nav" aria-label="戻る"><svg class="s16"><use href="#x-back"/></svg></button><button class="nav dim" aria-label="進む"><svg class="s16"><use href="#x-fwd"/></svg></button><button class="nav recent" aria-label="履歴"><svg class="s10"><use href="#i-down"/></svg></button><button class="nav parent" aria-label="上へ"><svg class="s16"><use href="#x-up"/></svg></button>
      <div class="crumbs"><svg class="s20"><use href="#x-folder"/></svg><i>«</i><a href="#">2023年</a><i>›</i><a href="#">Yahoo!つくば</a><svg class="s12 drop"><use href="#i-down"/></svg><button aria-label="更新"><svg class="s18"><use href="#x-refresh"/></svg></button></div>
      <label class="find"><svg class="s18"><use href="#x-search"/></svg><input type="search" placeholder="Yahoo!つくばの検索" aria-label="検索"></label>
    </div>
    <div class="ex-body">
      <ul class="places">
        <li><svg class="s18"><use href="#x-music"/></svg><a href="#">ミュージック</a></li>
        <li class="root"><svg class="s18"><use href="#x-pc"/></svg><a href="#">PC</a></li>
        <li><svg class="s18"><use href="#x-3d"/></svg><a href="#">3D オブジェクト</a></li>
        <li><svg class="s18"><use href="#x-download"/></svg><a href="#">ダウンロード</a></li>
        <li><svg class="s18"><use href="#x-desktop"/></svg><a href="#">デスクトップ</a></li>
        <li><svg class="s18"><use href="#x-doc"/></svg><a href="#">ドキュメント</a></li>
        <li><svg class="s18"><use href="#x-pic"/></svg><a href="#">ピクチャ</a></li>
        <li><svg class="s18"><use href="#x-video"/></svg><a href="#">ビデオ</a></li>
        <li><svg class="s18"><use href="#x-music"/></svg><a href="#">ミュージック</a></li>
        <li><svg class="s18"><use href="#x-win"/></svg><a href="#">Windows (C:)</a></li>
        <li><svg class="s18"><use href="#x-drive"/></svg><a href="#">USB ドライブ (N:)</a></li>
        <li class="root"><svg class="s18"><use href="#x-drive"/></svg><a href="#">USB ドライブ (N:)</a></li>
        <li class="sel"><svg class="s18"><use href="#x-folder"/></svg><a href="#">Win10_archive</a></li>
        <li class="root"><svg class="s18"><use href="#x-net"/></svg><a href="#">ネットワーク</a></li>
        <li><svg class="s18"><use href="#x-pc"/></svg><a href="#">MICHIO-CF-SV1</a></li>
      </ul>
      <div class="ex-scroll"><svg class="s12 flip"><use href="#i-down"/></svg><i></i><svg class="s12"><use href="#i-down"/></svg></div>
      <div class="files">
        <table><colgroup><col class="n"><col class="d"><col class="t"><col class="z"><col></colgroup>
          <thead><tr><th class="sorted">名前</th><th>更新日時</th><th>種類</th><th>サイズ</th><th></th></tr></thead>
          <tbody><tr><td><svg class="s18"><use href="#x-folder"/></svg>受信トレイ_20231015-0342</td><td>2023/10/15 3:44</td><td>ファイル フォル...</td><td></td><td></td></tr></tbody></table>
      </div>
    </div>
    <footer class="ex-status"><span>1 個の項目</span></footer>
  </section>

  <!-- Mail window after the export -->
  <section class="win tb tb-second" aria-label="Thunderbird エクスポート完了">
    <nav class="spaces" aria-label="スペース">
      <button class="space on" aria-label="メール"><svg><use href="#i-mail"/></svg></button>
      <button class="space" aria-label="アドレス帳"><svg><use href="#i-addr"/></svg></button>
      <button class="space" aria-label="カレンダー"><svg><use href="#i-cal"/></svg></button>
      <button class="space" aria-label="ToDo"><svg><use href="#i-task"/></svg></button>
      <button class="space" aria-label="チャット"><svg><use href="#i-chat"/></svg></button>
      <button class="space low" aria-label="設定"><svg><use href="#i-gear"/></svg></button>
      <button class="space" aria-label="折りたたむ"><svg><use href="#i-collapse"/></svg></button>
    </nav>
    <div class="tb-main">
      <header class="topbar">
        <label class="search"><input type="search" placeholder="検索..." aria-label="検索"><kbd>CTRL</kbd><span>+</span><kbd>K</kbd><svg class="s18"><use href="#i-search"/></svg></label>
      </header>
      <nav class="menubar"><button>ファイル(F)</button><button>編集(E)</button><button>表示(V)</button><button>移動(G)</button><button>メッセージ(M)</button><button>予定とToDo(N)</button><button>ツール(T)</button><button>ヘルプ(H)</button></nav>
      <div class="tb-body">
        <aside class="folders">
          <div class="compose"><svg class="s22"><use href="#i-cloud"/></svg><button class="new"><span>+</span>メッセージ...</button><button class="more" aria-label="その他"><svg class="s16"><use href="#i-more"/></svg></button></div>
          <ul class="tree">
            <li class="acct"><svg class="s14"><use href="#i-down"/></svg><svg class="s20"><use href="#i-account"/></svg><a href="#">Yahoo!つくば</a></li>
            <li class="sel"><svg class="s18"><use href="#i-inbox"/></svg><a href="#">受信トレイ</a></li>
            <li><svg class="s18"><use href="#i-draft"/></svg><a href="#">下書き</a></li>
            <li><svg class="s18"><use href="#i-sent"/></svg><a href="#">送信済みトレイ</a></li>
            <li><svg class="s18"><use href="#i-junk"/></svg><a href="#">迷惑メール</a></li>
            <li><svg class="s18"><use href="#i-trash"/></svg><a href="#">ごみ箱</a></li>
            <li><svg class="s18 gold"><use href="#i-folder"/></svg><a href="#">重要メール</a></li>
            <li class="acct"><svg class="s14"><use href="#i-down"/></svg><svg class="s20"><use href="#i-account"/></svg><a href="#">morinosatou</a></li>
            <li><svg class="s18 blue"><use href="#i-inbox"/></svg><a href="#">受信トレイ</a></li>
            <li><svg class="s18"><use href="#i-draft"/></svg><a href="#">下書き</a></li>
            <li><svg class="s18"><use href="#i-sent"/></svg><a href="#">送信済みトレイ</a></li>
            <li><svg class="s18"><use href="#i-junk"/></svg><a href="#">迷惑メール</a></li>
            <li><svg class="s18"><use href="#i-trash"/></svg><a href="#">ごみ箱</a></li>
            <li class="acct"><svg class="s14"><use href="#i-right"/></svg><svg class="s20 blue"><use href="#i-folder"/></svg><a href="#">ローカルフォルダ</a></li>
          </ul>
        </aside>
        <div class="messages">
          <div class="msg-head"><h2>受信トレイ</h2><span>メッセージ 2,142 通</span></div>
          <div class="msg-list">
            <table>
              <colgroup><col class="c30"><col class="c29"><col class="c30"><col></colgroup>
              <thead><tr><th><svg class="s16"><use href="#i-clip"/></svg></th><th><svg class="s16"><use href="#i-thread"/></svg></th><th><svg class="s16"><use href="#i-star"/></svg></th><th class="subj">件名</th></tr></thead>
              <tbody>
              <tr><td></td><td></td><td><svg class="s20 faint"><use href="#i-star"/></svg></td><td class="subj">お客さま満足度アンケート【トレンドマイクロ】 (ケー...</td></tr>
              <tr><td></td><td></td><td><svg class="s20 faint"><use href="#i-star"/></svg></td><td class="subj">トレンドマイクロ・サポートセンター受付番号: TM-...</td></tr>
              <tr><td></td><td></td><td><svg class="s20 faint"><use href="#i-star"/></svg></td><td class="subj">【本日記事のプレゼント情報お見逃しなく】藤井...</td></tr>
              <tr><td></td><td></td><td><svg class="s20 faint"><use href="#i-star"/></svg></td><td class="subj">新レーダー波 移動オービスMSSS対応機種 好評...</td></tr>
              <tr><td></td><td></td><td><svg class="s20 faint"><use href="#i-star"/></svg></td><td class="subj">&lt;JACCS&gt;2023年10月度お支払い金額確定の...</td></tr>
              <tr><td></td><td></td><td><svg class="s20 faint"><use href="#i-star"/></svg></td><td class="subj">&lt;JACCS&gt;2023年10月度お支払い金額確定の...</td></tr>
              <tr><td></td><td></td><td><svg class="s20 faint"><use href="#i-star"/></svg></td><td class="subj">【参加者募集中】2月開催・国宝犬山城下を走...</td></tr>
              <tr><td></td><td></td><td><svg class="s20 faint"><use href="#i-star"/></svg></td><td class="subj">トレンドマイクロ・サポートセンター受付番号: TM-...</td></tr>
              <tr><td></td><td></td><td><svg class="s20 faint"><use href="#i-star"/></svg></td><td class="subj">ウイルスバスター モバイルをご利用いただきありがと...</td></tr>
              <tr><td></td><td></td><td><svg class="s20 faint"><use href="#i-star"/></svg></td><td class="subj replied"><svg class="s14"><use href="#i-reply"/></svg>トレンドマイクロ・サポートセンター受付番号: TM-...</td></tr>
              <tr><td></td><td></td><td><svg class="s20 faint"><use href="#i-star"/></svg></td><td class="subj">マイナポータルにログインされました</td></tr>
              <tr><td></td><td></td><td><svg class="s20 faint"><use href="#i-star"/></svg></td><td class="subj">お荷物お届け完了のお知らせ【郵便受け】</td></tr>
              <tr><td></td><td></td><td><svg class="s20 faint"><use href="#i-star"/></svg></td><td class="subj">Amazon.co.jpの注文番号249-1396135-365</td></tr>
              <tr><td></td><td></td><td><svg class="s20 faint"><use href="#i-star"/></svg></td><td class="subj">会員情報変更完了:モバイルSuica</td></tr>
              <tr><td></td><td></td><td><svg class="s20 faint"><use href="#i-star"/></svg></td><td class="subj">会員情報変更完了:モバイルSuica</td></tr>
              <tr><td></td><td></td><td><svg class="s20 faint"><use href="#i-star"/></svg></td><td class="subj">確認コード通知:モバイルSuica</td></tr>
              <tr><td></td><td></td><td><svg class="s20 faint"><use href="#i-star"/></svg></td><td class="subj">会員情報変更完了:モバイルSuica</td></tr>
              <tr><td></td><td></td><td><svg class="s20 faint"><use href="#i-star"/></svg></td><td class="subj">[お知らせ] ご注文商品の配送状況について</td></tr>
              <tr><td></td><td></td><td><svg class="s20 faint"><use href="#i-star"/></svg></td><td class="subj">ご利用明細更新のお知らせ</td></tr>
              <tr><td></td><td></td><td><svg class="s20 faint"><use href="#i-star"/></svg></td><td class="subj">[Yahoo! JAPAN]ログインアラート 2023/10/13</td></tr>
              </tbody>
            </table>
          </div>
        </div>
      </div>
      <footer class="tb-status"><svg class="s22"><use href="#i-antenna"/></svg><svg class="s20 stop"><use href="#i-stop"/></svg><output>エクスポートしました 953 メッセージ: 2142</output></footer>
    </div>
  </section>

  <!-- Inside the exported folder -->
  <section class="win ex ex-two" aria-label="受信トレイ_20231015-0342">
    <header class="ex-title"><svg class="s20"><use href="#x-folder"/></svg><span class="qat"><i class="caret"></i></span><h2>受信トレイ_20231015-0342</h2></header>
    <nav class="tabs"><button class="file">ファイル</button><button class="on">ホーム</button><button>共有</button><button>表示</button></nav>
    <div class="ribbon">
      <div class="grp g1"><div class="tools"><button class="big dark w100"><svg class="pin"><use href="#x-pin"/></svg>クイック アクセス<br>にピン留めする</button><button class="big w48"><svg><use href="#x-copy"/></svg>コピー</button><button class="big w60"><svg><use href="#x-paste"/></svg>貼り付け</button><div class="small"><button><svg><use href="#x-cut"/></svg>切り取り</button><button><svg><use href="#x-path"/></svg>パスのコピー</button><button><svg><use href="#x-spaste"/></svg>ショートカットの貼り付け</button></div></div><span>クリップボード</span></div>
      <div class="grp g2"><div class="tools"><button class="big w52"><svg><use href="#x-move"/></svg>移動先<i class="caret"></i></button><button class="big w52"><svg><use href="#x-copyto"/></svg>コピー先<i class="caret"></i></button><button class="big dark w52 split"><svg><use href="#x-del"/></svg>削除<i class="caret"></i></button><button class="big w48"><svg><use href="#x-rename"/></svg>名前の<br>変更</button></div><span>整理</span></div>
      <div class="grp g3"><div class="tools"><button class="big dark w64"><svg><use href="#x-bigfolder"/></svg>新しい<br>フォルダー</button><div class="small dark"><button><svg><use href="#x-newitem"/></svg>新しいアイテム<i class="caret"></i></button><button><svg><use href="#x-shortcut"/></svg>ショートカット<i class="caret"></i></button></div></div><span>新規</span></div>
    </div>
    <div class="addr">
      <button class="nav" aria-label="戻る"><svg class="s16"><use href="#x-back"/></svg></button><button class="nav dim" aria-label="進む"><svg class="s16"><use href="#x-fwd"/></svg></button><button class="nav recent" aria-label="履歴"><svg class="s10"><use href="#i-down"/></svg></button><button class="nav parent" aria-label="上へ"><svg class="s16"><use href="#x-up"/></svg></button>
      <div class="crumbs"><svg class="s20"><use href="#x-folder"/></svg><i>«</i><a href="#">Yahoo!つくば</a><i>›</i><a href="#">受信トレイ_20231015-0342</a><svg class="s12 drop"><use href="#i-down"/></svg><button aria-label="更新"><svg class="s18"><use href="#x-refresh"/></svg></button></div>
      <label class="find"><svg class="s18"><use href="#x-search"/></svg><input type="search" aria-label="検索"></label>
    </div>
    <div class="ex-body">
      <ul class="places">
        <li><svg class="s18"><use href="#x-music"/></svg><a href="#">ミュージック</a></li>
        <li class="root"><svg class="s18"><use href="#x-pc"/></svg><a href="#">PC</a></li>
        <li><svg class="s18"><use href="#x-3d"/></svg><a href="#">3D オブジェクト</a></li>
        <li><svg class="s18"><use href="#x-download"/></svg><a href="#">ダウンロード</a></li>
        <li><svg class="s18"><use href="#x-desktop"/></svg><a href="#">デスクトップ</a></li>
        <li><svg class="s18"><use href="#x-doc"/></svg><a href="#">ドキュメント</a></li>
        <li><svg class="s18"><use href="#x-pic"/></svg><a href="#">ピクチャ</a></li>
        <li><svg class="s18"><use href="#x-video"/></svg><a href="#">ビデオ</a></li>
        <li><svg class="s18"><use href="#x-music"/></svg><a href="#">ミュージック</a></li>
        <li><svg class="s18"><use href="#x-win"/></svg><a href="#">Windows (C:)</a></li>
        <li><svg class="s18"><use href="#x-drive"/></svg><a href="#">USB ドライブ (N:)</a></li>
        <li class="root"><svg class="s18"><use href="#x-drive"/></svg><a href="#">USB ドライブ (N:)</a></li>
        <li class="sel"><svg class="s18"><use href="#x-folder"/></svg><a href="#">Win10_archive</a></li>
      </ul>
      <div class="ex-scroll"><svg class="s12 flip"><use href="#i-down"/></svg><i></i><svg class="s12"><use href="#i-down"/></svg></div>
      <div class="files">
        <table><colgroup><col class="n"><col class="d"></colgroup>
          <thead><tr><th class="sorted">名前</th><th>更新日時</th></tr></thead>
          <tbody><tr><td><svg class="s18"><use href="#x-folder"/></svg>メッセージ</td><td>2023/10/15 3:44</td></tr>
          <tr><td><svg class="s20"><use href="#x-edge"/></svg>index.html</td><td>2023/10/15 3:44</td></tr></tbody></table>
      </div>
    </div>
  </section>

  <!-- Exported messages -->
  <section class="win ex ex-three" aria-label="メッセージ">
    <header class="ex-title"><svg class="s20"><use href="#x-folder"/></svg><span class="qat"><i class="caret"></i></span><h2>メッセージ</h2></header>
    <nav class="tabs"><button class="file">ファイル</button><button class="on">ホーム</button><button>共有</button><button>表示</button></nav>
    <div class="ribbon">
      <div class="grp g1"><div class="tools"><button class="big dark w100"><svg class="pin"><use href="#x-pin"/></svg>クイック アクセス<br>にピン留めする</button><button class="big w48"><svg><use href="#x-copy"/></svg>コピー</button><button class="big w60"><svg><use href="#x-paste"/></svg>貼り付け</button><div class="small"><button><svg><use href="#x-cut"/></svg>切り取り</button><button><svg><use href="#x-path"/></svg>パスのコピー</button><button><svg><use href="#x-spaste"/></svg>ショートカットの貼り付け</button></div></div><span>クリップボード</span></div>
      <div class="grp g2"><div class="tools"><button class="big w52"><svg><use href="#x-move"/></svg>移動先<i class="caret"></i></button><button class="big w52"><svg><use href="#x-copyto"/></svg>コピー先<i class="caret"></i></button><button class="big dark w52 split"><svg><use href="#x-del"/></svg>削除<i class="caret"></i></button><button class="big w48"><svg><use href="#x-rename"/></svg>名前の<br>変更</button></div><span>整理</span></div>
      <div class="grp g3"><div class="tools"><button class="big dark w64"><svg><use href="#x-bigfolder"/></svg>新しい<br>フォルダー</button><div class="small dark"><button><svg><use href="#x-newitem"/></svg>新しいアイテム<i class="caret"></i></button><button><svg><use href="#x-shortcut"/></svg>ショートカット<i class="caret"></i></button></div></div><span>新規</span></div>
      <div class="grp g4"><div class="tools"><button class="big dark w60"><svg><use href="#x-props"/></svg>プロパティ<i class="caret"></i></button><div class="small"><button><svg><use href="#x-open"/></svg>開く<i class="caret"></i></button><button><svg><use href="#x-edit"/></svg>編集</button><button class="dark"><svg><use href="#x-history"/></svg>履歴</button></div></div><span>開く</span></div>
      <div class="grp g5"><div class="tools"><div class="small dark"><button><svg><use href="#x-selall"/></svg>すべて選択</button><button><svg><use href="#x-selnone"/></svg>選択解除</button><button><svg><use href="#x-selinv"/></svg>選択の切り替え</button></div></div><span>選択</span></div>
    </div>
    <div class="addr">
      <button class="nav" aria-label="戻る"><svg class="s16"><use href="#x-back"/></svg></button><button class="nav dim" aria-label="進む"><svg class="s16"><use href="#x-fwd"/></svg></button><button class="nav recent" aria-label="履歴"><svg class="s10"><use href="#i-down"/></svg></button><button class="nav parent" aria-label="上へ"><svg class="s16"><use href="#x-up"/></svg></button>
      <div class="crumbs"><svg class="s20"><use href="#x-folder"/></svg><i>«</i><a href="#">受信トレイ_20231015-0342</a><i>›</i><a href="#">メッセージ</a><svg class="s12 drop"><use href="#i-down"/></svg><button aria-label="更新"><svg class="s18"><use href="#x-refresh"/></svg></button></div>
      <label class="find"><svg class="s18"><use href="#x-search"/></svg><input type="search" placeholder="メッセージの検索" aria-label="検索"></label>
    </div>
    <div class="ex-body">
      <ul class="places">
        <li><svg class="s18"><use href="#x-music"/></svg><a href="#">ミュージック</a></li>
        <li class="root"><svg class="s18"><use href="#x-pc"/></svg><a href="#">PC</a></li>
        <li><svg class="s18"><use href="#x-3d"/></svg><a href="#">3D オブジェクト</a></li>
        <li><svg class="s18"><use href="#x-download"/></svg><a href="#">ダウンロード</a></li>
        <li><svg class="s18"><use href="#x-desktop"/></svg><a href="#">デスクトップ</a></li>
        <li><svg class="s18"><use href="#x-doc"/></svg><a href="#">ドキュメント</a></li>
        <li><svg class="s18"><use href="#x-pic"/></svg><a href="#">ピクチャ</a></li>
        <li><svg class="s18"><use href="#x-video"/></svg><a href="#">ビデオ</a></li>
        <li><svg class="s18"><use href="#x-music"/></svg><a href="#">ミュージック</a></li>
        <li><svg class="s18"><use href="#x-win"/></svg><a href="#">Windows (C:)</a></li>
        <li><svg class="s18"><use href="#x-drive"/></svg><a href="#">USB ドライブ (N:)</a></li>
        <li class="root"><svg class="s18"><use href="#x-drive"/></svg><a href="#">USB ドライブ (N:)</a></li>
        <li class="sel"><svg class="s18"><use href="#x-folder"/></svg><a href="#">Win10_archive</a></li>
        <li class="root"><svg class="s18"><use href="#x-net"/></svg><a href="#">ネットワーク</a></li>
        <li><svg class="s18"><use href="#x-pc"/></svg><a href="#">MICHIO-CF-SV1</a></li>
      </ul>
      <div class="ex-scroll"><svg class="s12 flip"><use href="#i-down"/></svg><i></i><svg class="s12"><use href="#i-down"/></svg></div>
      <div class="files">
        <table><colgroup><col class="n"><col class="d"><col class="t"><col class="z"><col></colgroup>
          <thead><tr><th class="sorted">名前</th><th>更新日時</th><th>種類</th><th>サイズ</th><th></th></tr></thead>
          <tbody>
          <tr><td><svg class="s20"><use href="#x-bird"/></svg>20230101-【謹賀新年】電動...</td><td>2023/10/15 3:46</td><td>Thunderbir...</td><td>61 KB</td><td></td></tr>
          <tr><td><svg class="s20"><use href="#x-bird"/></svg>20230102-Happy new year...</td><td>2023/10/15 3:44</td><td>Thunderbir...</td><td>31 KB</td><td></td></tr>
          <tr><td><svg class="s20"><use href="#x-bird"/></svg>20230102-Just MyShop「シ...</td><td>2023/10/15 3:44</td><td>Thunderbir...</td><td>7 KB</td><td></td></tr>
          <tr><td><svg class="s20"><use href="#x-bird"/></svg>20230102-PayPayカードのご...</td><td>2023/10/15 3:44</td><td>Thunderbir...</td><td>38 KB</td><td></td></tr>
          <tr><td><svg class="s20"><use href="#x-bird"/></svg>20230103-お問合受付完了...</td><td>2023/10/15 3:46</td><td>Thunderbir...</td><td>6 KB</td><td></td></tr>
          <tr><td><svg class="s20"><use href="#x-bird"/></svg>20230104-[84492-2]ネスカ...</td><td>2023/10/15 3:46</td><td>Thunderbir...</td><td>6 KB</td><td></td></tr>
          <tr><td><svg class="s20"><use href="#x-bird"/></svg>20230104-【ウイークリーコープ】...</td><td>2023/10/15 3:44</td><td>Thunderbir...</td><td>6 KB</td><td></td></tr>
          <tr><td><svg class="s20"><use href="#x-bird"/></svg>20230104-1月のハッピープロ...</td><td>2023/10/15 3:44</td><td>Thunderbir...</td><td>126 KB</td><td></td></tr>
          <tr><td><svg class="s20"><use href="#x-bird"/></svg>20230104-PayPayカードのご...</td><td>2023/10/15 3:44</td><td>Thunderbir...</td><td>38 KB</td><td></td></tr>
          <tr><td><svg class="s20"><use href="#x-bird"/></svg>20230104-ウイルスバスター モ...</td><td>2023/10/15 3:46</td><td>Thunderbir...</td><td>22 KB</td><td></td></tr>
          <tr><td><svg class="s20"><use href="#x-bird"/></svg>20230104-ウイルスバスター モ...</td><td>2023/10/15 3:44</td><td>Thunderbir...</td><td>22 KB</td><td></td></tr>
          <tr><td><svg class="s20"><use href="#x-bird"/></svg>20230104-ギャルマインドでイ...</td><td>2023/10/15 3:44</td><td>Thunderbir...</td><td>35 KB</td><td></td></tr>
          <tr><td><svg class="s20"><use href="#x-bird"/></svg>20230105- 質問は解決しまし...</td><td>2023/10/15 3:44</td><td>Thunderbir...</td><td>11 KB</td><td></td></tr>
          <tr><td><svg class="s20"><use href="#x-bird"/></svg>20230105-【ねんきんネット】...</td><td>2023/10/15 3:44</td><td>Thunderbir...</td><td>18 KB</td><td></td></tr>
          <tr><td><svg class="s20"><use href="#x-bird"/></svg>20230105-【パスワード再設定...</td><td>2023/10/15 3:44</td><td>Thunderbir...</td><td>5 KB</td><td></td></tr>
          <tr><td><svg class="s20"><use href="#x-bird"/></svg>20230105-【三井住友銀行】...</td><td>2023/10/15 3:44</td><td>Thunderbir...</td><td>13 KB</td><td></td></tr>
          <tr><td><svg class="s20"><use href="#x-bird"/></svg>20230105-1_19オンライン開</td><td>2023/10/15 3:44</td><td>Thunderbir...</td><td>8 KB</td><td></td></tr>
          </tbody></table>
      </div>
    </div>
  </section>

  <!-- Step arrows and the result frame -->
  <svg class="arrows" aria-hidden="true">
    <defs><marker id="head" viewBox="0 0 30 24" refX="29" refY="12" markerWidth="30" markerHeight="24" markerUnits="userSpaceOnUse" orient="auto"><path d="M0 0l30 12L0 24l7-12z" fill="#e62a08"/></marker></defs>
    <g stroke="#e62a08" stroke-width="3">
      <path d="M1598 735L696 1622" marker-end="url(#head)"/>
      <path d="M770 1666L1058 1939" marker-end="url(#head)"/>
      <path d="M1153 1991L594 2118" marker-end="url(#head)"/>
      <path d="M517 2165L1214 2558" marker-end="url(#head)"/>
      <path d="M1251 2588L556 2996" marker-end="url(#head)"/>
    </g>
    <rect x="953" y="1945" width="410" height="40" fill="none" stroke="#f93d12" stroke-width="4"/>
  </svg>
</main>
</body>
</html>
```
FILE: styles.css
```css
* { box-sizing: border-box; }
body { margin: 0; background: #fff; color: #15141a; font: 20px/30px "Noto Sans", "Noto Sans CJK JP", sans-serif; font-feature-settings: "palt"; }
button, input { font: inherit; font-feature-settings: inherit; color: inherit; background: none; border: 0; padding: 0; margin: 0; }
input[type="search"] { appearance: none; }
input::-webkit-search-cancel-button { display: none; }
button { white-space: nowrap; }
a { color: inherit; text-decoration: none; }
ul { list-style: none; margin: 0; padding: 0; }
h2, p { margin: 0; }
i { font-style: normal; }
svg { display: block; flex: none; }
table { border-collapse: collapse; table-layout: fixed; width: 100%; }
th { font-weight: 400; }
th, td { padding: 0; white-space: nowrap; overflow: hidden; text-align: left; }
.sprite { position: absolute; width: 0; height: 0; }
.s10 { width: 10px; height: 10px; }
.s12 { width: 12px; height: 12px; }
.s14 { width: 14px; height: 14px; }
.s16 { width: 16px; height: 16px; }
.s18 { width: 18px; height: 18px; }
.s20 { width: 20px; height: 20px; }
.s22 { width: 22px; height: 22px; }
.gold { color: #e0a31c; }
.blue { color: #2f93f5; }
.faint { color: #bfbfc6; }

.canvas { position: relative; display: flex; flex-direction: column; align-items: flex-start; padding: 7px 0 25px; overflow: hidden; }
.win { overflow: hidden; border: 2px solid #1c1c1f; background: #fff; max-width: 100%; }

/* Mail window */
.tb { display: flex; }
.tb-first { width: 1418px; height: 876px; margin-left: 7px; }
.tb-second { position: absolute; z-index: 2; left: 861px; top: 1110px; width: 816px; height: 881px; padding-top: 2px; }
.spaces { width: 54px; display: flex; flex-direction: column; align-items: center; padding: 8px 0 10px; gap: 18px; background: linear-gradient(90deg, #ebebeb, #d8d8d8); }
.space { width: 38px; height: 38px; display: grid; place-items: center; border-radius: 3px; }
.space svg { width: 24px; height: 24px; }
.space.on { background: #1373d9; color: #d8eaff; }
.space.low { margin-top: auto; }
.tb-main { flex: 1; min-width: 0; display: flex; flex-direction: column; }
.topbar { height: 64px; flex: none; display: flex; align-items: center; padding: 0 6px 0 215px; background: #d4d3d9; border-bottom: 1px solid #abaab1; }
.search { flex: 1; max-width: 538px; height: 42px; display: flex; align-items: center; padding: 0 8px 0 13px; background: #fff; border: 1px solid #98979e; border-radius: 4px; }
.search input { width: 64px; outline: 0; }
.search input::placeholder { color: #8e8e92; opacity: 1; }
.search kbd { font: 700 18px/20px "Noto Sans", sans-serif; color: #3f3f44; background: #e2e2e5; border-bottom: 2px solid #a9a9ad; border-radius: 3px; padding: 0 5px; margin-left: 4px; }
.search span { margin: 0 4px 0 10px; color: #77777b; }
.search svg { margin-left: auto; }
.wincontrols { margin-left: auto; display: flex; align-items: center; gap: 43px; padding-right: 16px; }
.addon { display: flex; align-items: center; gap: 5px; margin-right: -4px; }
.menubar { height: 35px; flex: none; display: flex; gap: 15px; align-items: center; padding-left: 9px; background: #d4d3d9; overflow: hidden; }
.tb-body { flex: 1; min-height: 0; display: flex; }
.folders { width: 260px; flex: none; background: #f9f9fa; border-right: 1px solid #d0d0d4; }
.compose { display: flex; align-items: center; padding: 12px 18px 0 16px; }
.compose .new { width: 154px; height: 47px; margin-left: 15px; display: flex; align-items: center; gap: 8px; padding-left: 11px; color: #fff; background: #1373d9; border: 1px solid #0b57ab; border-radius: 3px; }
.compose .more { margin-left: auto; }
.tree { padding: 11px 8px 0 8px; }
.tree li { height: 32px; display: flex; align-items: center; gap: 11px; padding-left: 48px; }
.tree .acct { height: 35px; padding-left: 6px; gap: 8px; font-weight: 600; color: #000; }
.tree .sel { color: #fff; background: #2492ee; border-radius: 4px; }
.tree .marked { height: 36px; margin: -2px 0; border: 3px solid #f93d12; border-radius: 0; padding-left: 45px; }
.messages { flex: 1; min-width: 0; display: flex; flex-direction: column; }
.msg-head { height: 56px; flex: none; display: flex; align-items: center; padding: 0 17px 0 9px; gap: 20px; background: #f9f9fa; border-bottom: 1px solid #d4d4d8; }
.msg-head h2 { font-size: 23px; font-weight: 700; }
.msg-head .quick { margin: 0 13px 0 auto; display: flex; align-items: center; gap: 9px; }
.quick i { width: 5px; height: 15px; border: 1px solid #c4c4c8; border-radius: 3px; background: #e6e6ea; }
.msg-list { flex: 1; min-height: 0; overflow: hidden; display: flex; align-items: stretch; color: #1d1b3a; }
.msg-list table { flex: 1; min-width: 0; align-self: flex-start; }
.msg-list thead tr { height: 38px; border-bottom: 1px solid #d4d4d8; }
.msg-list tbody tr { height: 32px; }
.msg-list tbody tr:nth-child(even) { height: 33px; }
.msg-list td { line-height: 32px; height: 32px; }
.msg-list th + th { border-left: 1px solid #dcdce0; }
.msg-list th svg, .msg-list td svg { margin: 0 auto; }
.c29 { width: 29px; }
.c30 { width: 30px; }
.c31 { width: 31px; }
.c188 { width: 188px; }
.c252 { width: 252px; }
.msg-list .subj { padding-left: 25px; }
.tb-first .subj { text-overflow: ellipsis; }
.msg-list .replied { padding-left: 8px; }
.msg-list .replied svg { display: inline-block; margin-right: 3px; }
.msg-list .who { padding-left: 31px; }
.msg-list .date { padding-left: 9px; }
.msg-list th.date svg { display: inline-block; margin-left: 70px; }
.tb-scroll { width: 21px; flex: none; background: #efeff0; display: flex; flex-direction: column; align-items: center; padding-top: 5px; }
.tb-scroll svg { transform: rotate(180deg); color: #666; }
.tb-scroll i { width: 21px; height: 20px; margin-top: 3px; background: #c9c9cb; }
.tb-status { height: 37px; flex: none; display: flex; align-items: center; padding-left: 7px; font-size: 18px; background: #f9f9fa; border-top: 1px solid #d0d0d4; }
.tb-second .tb-status { height: 39px; }
.tb-status .rule { width: 1px; height: 100%; margin: 0 13px 0 7px; background: #dcdce0; }
.tb-status .stop { margin: 0 20px 0 14px; }

/* Popup menus */
.menu { position: absolute; padding: 6px 5px; background: #f9f9fb; border: 1px solid #9d9da3; border-radius: 8px; box-shadow: 0 1px 2px #0003; }
.menu button { width: 100%; height: 43px; display: flex; align-items: center; padding: 0 10px 0 39px; font-size: 19px; text-align: left; }
.menu .go { margin-left: auto; }
.menu .sep { height: 10px; padding-top: 3px; }
.menu .sep::before { content: ""; display: block; height: 1px; margin: 0 5px; background: #cfcfd3; }
.menu .hot { background: #dcdcdc; border: 3px solid #f93d12; padding: 0 7px 0 36px; }
.menu .iconed { padding-left: 8px; gap: 6px; }
.menu-folder { left: 294px; top: 225px; width: 324px; }
.menu-tools { left: 613px; top: 615px; width: 519px; }
.menu-format { left: 1128px; top: 676px; width: 364px; padding: 4px 5px 4px 3px; }
.menu-index { position: absolute; left: 1489px; top: 680px; width: 365px; height: 57px; padding-left: 41px; text-align: left; background: #fbfbfc; border: 3px solid #f93d12; font-size: 19px; }

/* Explorer parts */
.places { width: 265px; flex: none; padding-top: 3px; color: #000; }
.places li { height: 30px; display: flex; align-items: center; gap: 7px; padding-left: 42px; white-space: nowrap; }
.places .root { margin-top: 10px; padding-left: 32px; }
.places .sel { background: #d9d9d9; margin-right: 2px; }
.ex-scroll { width: 20px; flex: none; display: flex; flex-direction: column; align-items: center; padding: 8px 0 5px; background: #f0f0f0; color: #555; }
.ex-scroll i { width: 20px; height: 230px; margin: auto 0 5px; background: #cdcdcd; }
.flip { transform: rotate(180deg); }
.left { transform: rotate(90deg); }
.files { flex: 1; min-width: 0; margin-left: 2px; border-left: 1px solid #ededed; display: flex; flex-direction: column; }
.files thead tr { height: 48px; color: #4c607a; }
.files th { padding-left: 10px; }
.files th + th { background: linear-gradient(#e2e2e2, #e2e2e2) 0 2px / 1px 42px no-repeat; }
.files .n { width: 341px; }
.files .d { width: 181px; }
.files .t { width: 149px; }
.files .z { width: 101px; }
.files th.sorted { padding-left: 26px; background: linear-gradient(135deg, #0000 5px, #888 5px 6px, #0000 6px) 173px 2px / 6px 6px no-repeat, linear-gradient(225deg, #0000 5px, #888 5px 6px, #0000 6px) 179px 2px / 6px 6px no-repeat; }
.files tbody::before { content: ""; display: block; height: 5px; }
.files tbody tr { height: 27px; }
.files td { height: 27px; line-height: 27px; padding-left: 10px; color: #6d6d6d; text-overflow: ellipsis; }
.files td:first-child { padding-left: 25px; color: #000; }
.files td svg { float: left; margin: 4px 5px 0 0; }
.files td svg.s18 { margin: 5px 6px 0 1px; }
.files td:nth-child(4) { text-align: right; padding-right: 13px; }
.addr { height: 60px; flex: none; display: flex; align-items: center; padding: 0 12px 0 14px; color: #555; }
.nav { width: 38px; flex: none; display: flex; padding-left: 4px; }
.recent { width: 20px; padding-left: 0; }
.parent { width: 26px; padding-left: 1px; }
.dim { color: #c9c9c9; }
.crumbs { width: 606px; height: 48px; flex: none; display: flex; align-items: center; border: 1px solid #d9d9d9; color: #000; overflow: hidden; white-space: nowrap; }
.crumbs i { width: 36px; text-align: center; color: #777; }
.crumbs .drop { margin-left: auto; margin-right: 17px; color: #666; }
.crumbs button { width: 48px; height: 46px; display: grid; place-items: center; border-left: 1px solid #d9d9d9; }
.find { flex: 1; min-width: 0; height: 48px; margin-left: 12px; display: flex; align-items: center; gap: 16px; padding-left: 16px; border: 1px solid #d9d9d9; overflow: hidden; }
.find input { flex: 1; min-width: 0; outline: 0; }
.find input::placeholder { color: #757575; opacity: 1; }
.caret { display: inline-block; border: 4px solid transparent; border-top: 5px solid currentColor; border-bottom: 0; }
.ex-body { display: flex; }

/* Folder picker */
.dialog { width: 950px; margin: 197px 0 0 8px; display: flex; flex-direction: column; }
.dlg-title { height: 40px; display: flex; justify-content: flex-end; align-items: center; padding-right: 18px; }
.dialog .addr { height: 62px; padding-left: 15px; }
.dialog .crumbs { width: 532px; }
.dialog .crumbs .drop { margin-right: 19px; }
.dialog .crumbs button { width: 53px; }
.dlg-tools { height: 39px; display: flex; align-items: center; gap: 36px; padding: 0 98px 0 25px; font-size: 14px; color: #1e395b; background: #f5f6f8; border-bottom: 1px solid #e0e1e4; }
.dlg-tools .caret { margin-left: 5px; vertical-align: 2px; }
.dlg-tools svg { margin-left: auto; }
.dialog .places { padding: 0; }
.dialog .places li { padding-left: 44px; }
.dialog .places .root { padding-left: 34px; }
.dialog .ex-body { height: 348px; }
.dialog .ex-scroll i { height: 103px; margin-bottom: 29px; }
.empty { text-align: center; color: #6d6d6d; margin-top: 14px; }
.hscroll { margin-top: auto; height: 20px; display: flex; align-items: center; background: #f0f0f0; padding-left: 5px; gap: 5px; color: #555; }
.hscroll i { width: 514px; height: 20px; background: #cdcdcd; }
.dlg-foot { background: #f0f0f0; height: 100px; padding: 15px 18px 0 146px; font-size: 14px; border-top: 1px solid #ececec; }
.field { display: flex; align-items: center; gap: 4px; }
.field label { width: 64px; text-align: right; white-space: nowrap; }
.field input { flex: 1; height: 30px; background: #fff; border: 1px solid #7a7a7a; padding: 0 4px; }
.acts { display: flex; justify-content: flex-end; gap: 17px; margin-top: 8px; margin-right: -49px; }
.acts button { width: 162px; height: 32px; background: #e1e1e1; border: 1px solid #adadad; }
.acts .primary { border: 2px solid #0078d7; }

/* Explorer windows */
.ex-one { width: 1287px; margin: 141px 0 0 6px; box-shadow: inset 0 -3px #b9bec6; }
.ex-two { position: absolute; left: 900px; top: 2245px; width: 799px; height: 681px; border-right-width: 1px; border-bottom-width: 1px; }
.ex-three { position: relative; z-index: 1; width: 1081px; height: 769px; margin: 76px 0 0 9px; padding-left: 4px; }
.ex-two, .ex-three { padding-top: 2px; }
.ex-title { height: 41px; display: flex; align-items: center; padding-left: 8px; color: #000; }
.qat { width: 35px; height: 18px; margin: 0 9px 0 7px; display: grid; place-items: center; border: solid #9a9a9a; border-width: 0 1px; }
.ex-title h2 { font-size: 20px; font-weight: 400; }
.tabs { height: 32px; display: flex; align-items: stretch; font-size: 14px; color: #333; border-bottom: 1px solid #dadbdc; }
.tabs button { width: 66px; height: 28px; }
.tabs .file { width: 71px; background: #4f9a1e; color: #16300a; }
.tabs .on { width: 67px; height: 32px; background: #f5f6f7; border: 1px solid #dadbdc; border-bottom: 0; }
.ribbon { height: 123px; display: flex; background: #f5f6f8; border-bottom: 1px solid #dadbdc; font-size: 13px; line-height: 20px; color: #7c7c7c; overflow: hidden; }
.grp { flex: none; display: flex; flex-direction: column; border-right: 1px solid #e0e1e3; margin: 2px 0; }
.grp > span { text-align: center; color: #555; font-size: 14px; }
.tools { height: 97px; display: flex; align-items: flex-start; }
.g1 { width: 387px; padding-left: 6px; }
.g2 { width: 221px; padding-left: 2px; }
.g3 { width: 196px; padding-left: 2px; }
.g4 { width: 136px; padding-left: 2px; }
.g5 { flex: 1; padding-left: 4px; border-right: 0; }
.big { flex: none; line-height: 20px; text-align: center; }
.big svg { width: 36px; height: 36px; margin: 6px auto 7px; }
.big .pin { width: 26px; height: 26px; margin: 12px auto 11px; }
.big .caret { display: block; width: 8px; margin: 0 auto; }
.w48 { width: 48px; }
.w52 { width: 52px; }
.w60 { width: 60px; }
.w64 { width: 64px; }
.w100 { width: 100px; }
.split { margin-left: 1px; border-left: 1px solid #e0e1e3; }
.dark { color: #2d2d2d; }
.small { padding-top: 2px; margin-left: 4px; }
.small button { display: flex; align-items: center; gap: 4px; height: 26px; }
.small svg { width: 18px; height: 18px; }
.small .caret { margin-left: 4px; }
.ex .ex-body { height: 503px; }
.ex-status { height: 32px; padding: 0 20px; font-size: 14px; color: #1e395b; }

.arrows { position: absolute; z-index: 3; left: 0; top: 0; width: 100%; height: 100%; pointer-events: none; }
```
